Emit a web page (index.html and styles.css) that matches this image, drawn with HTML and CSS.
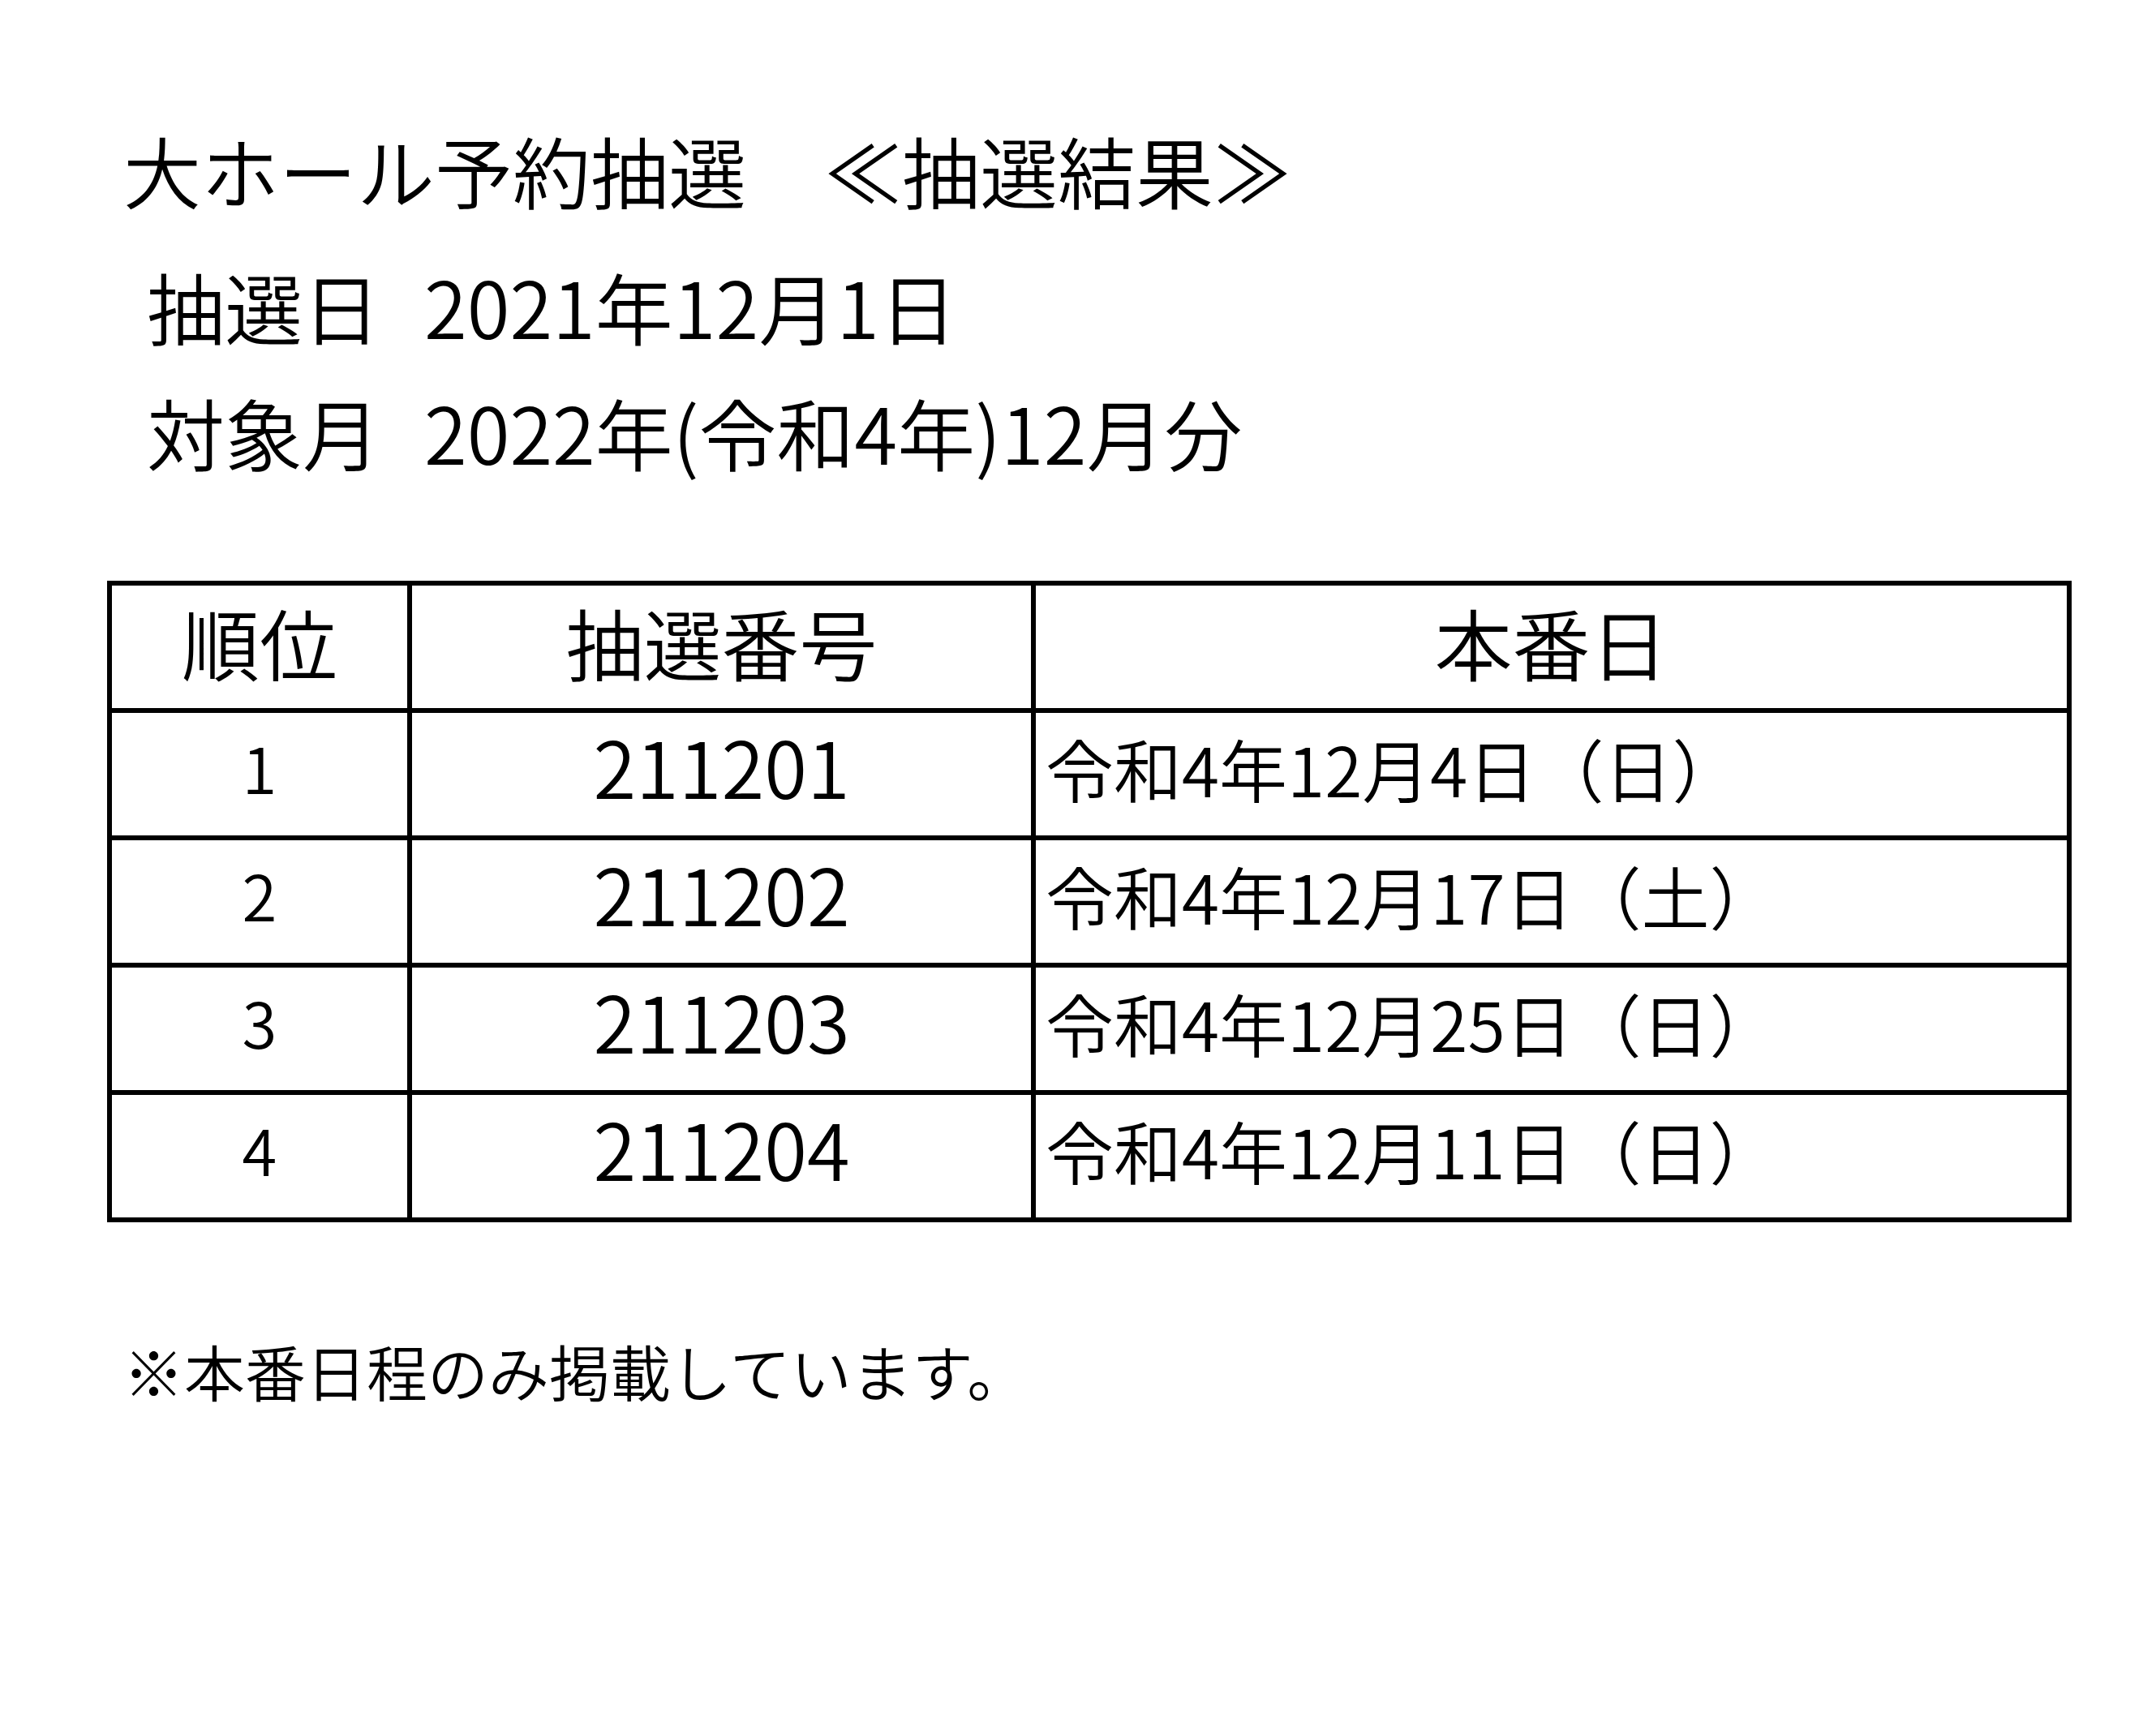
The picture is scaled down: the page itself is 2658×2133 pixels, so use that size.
FILE: index.html
```html
<!DOCTYPE html>
<html lang="ja">
<head>
<meta charset="utf-8">
<title>大ホール予約抽選 抽選結果</title>
<link rel="stylesheet" href="styles.css">
</head>
<body>
<div class="page">
  <h1 class="title">大ホール予約抽選　≪抽選結果≫</h1>
  <div class="info">
    <p class="info-line"><span class="label">抽選日</span><span class="val">2021年12月1日</span></p>
    <p class="info-line"><span class="label">対象月</span><span class="val">2022年(令和4年)12月分</span></p>
  </div>
  <table class="result">
    <thead>
      <tr>
        <th class="c1">順位</th>
        <th class="c2">抽選番号</th>
        <th class="c3">本番日</th>
      </tr>
    </thead>
    <tbody>
      <tr>
        <td class="c1 rank">1</td>
        <td class="c2 num">211201</td>
        <td class="c3 date">令和4年12月4日（日）</td>
      </tr>
      <tr>
        <td class="c1 rank">2</td>
        <td class="c2 num">211202</td>
        <td class="c3 date">令和4年12月17日（土）</td>
      </tr>
      <tr>
        <td class="c1 rank">3</td>
        <td class="c2 num">211203</td>
        <td class="c3 date">令和4年12月25日（日）</td>
      </tr>
      <tr>
        <td class="c1 rank">4</td>
        <td class="c2 num">211204</td>
        <td class="c3 date">令和4年12月11日（日）</td>
      </tr>
    </tbody>
  </table>
  <p class="note">※本番日程のみ掲載しています。</p>
</div>
</body>
</html>
```
FILE: styles.css
```css
html, body {
  margin: 0;
  padding: 0;
  background: #ffffff;
}

body {
  font-family: "Noto Sans CJK JP", "Noto Sans", sans-serif;
  font-weight: 350;
  color: #000000;
}

.page {
  padding: 134px 0 0 132px;
}

.title {
  margin: 0;
  padding-left: 20px;
  font-size: 96px;
  font-weight: 350;
  line-height: 150px;
  white-space: nowrap;
}

.info {
  margin-top: 15px;
  padding-left: 49px;
}

.info-line {
  margin: 0;
  font-size: 96px;
  line-height: 155px;
  white-space: nowrap;
}

.val {
  margin-left: 54px;
}

.result {
  margin-top: 107px;
  border-collapse: separate;
  border-spacing: 6px;
  background: #000000;
  table-layout: fixed;
}

.result th,
.result td {
  background: #ffffff;
  height: 151px;
  padding: 0;
  box-sizing: border-box;
  vertical-align: middle;
  white-space: nowrap;
  line-height: 1;
}

.result th {
  font-size: 96px;
  font-weight: 350;
  text-align: center;
  padding-bottom: 14px;
}

.c1 { width: 364px; }
.c2 { width: 763px; }
.c3 { width: 1271px; }

.result td.rank {
  font-size: 78px;
  text-align: center;
  padding-bottom: 19px;
}

.result td.num {
  font-size: 96px;
  text-align: center;
  padding-bottom: 21px;
}

.result td.date {
  font-size: 84px;
  text-align: left;
  padding-left: 12px;
  padding-bottom: 16px;
}

.note {
  margin: 133px 0 0 0;
  padding-left: 20px;
  font-size: 75px;
  line-height: 100px;
  white-space: nowrap;
}
```
